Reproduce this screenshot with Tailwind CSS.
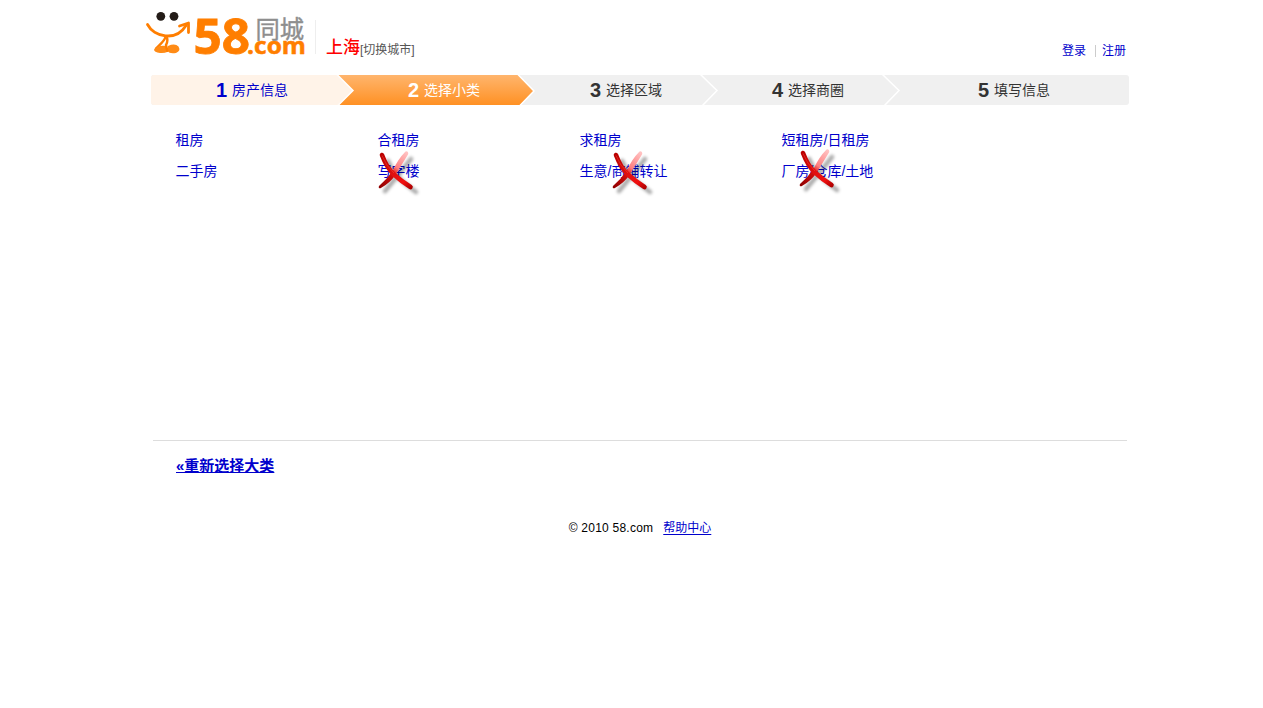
<!DOCTYPE html>
<html lang="zh-CN">
<head>
<meta charset="utf-8">
<title>58同城</title>
<script src="https://cdn.jsdelivr.net/npm/@tailwindcss/browser@4"></script>
</head>
<body class="bg-white overflow-hidden font-['Liberation_Sans','Noto_Sans_CJK_SC',sans-serif] text-[14px] text-[#0000cc]">
<svg class="absolute w-0 h-0">
  <defs>
    <linearGradient id="r" gradientUnits="userSpaceOnUse" x1="4" y1="5" x2="34" y2="39"><stop offset="0" stop-color="#b80000"/><stop offset=".5" stop-color="#e01010"/><stop offset=".8" stop-color="#f01010"/><stop offset="1" stop-color="#b00000"/></linearGradient>
    <linearGradient id="p" gradientUnits="userSpaceOnUse" x1="30" y1="3" x2="4" y2="39"><stop offset="0" stop-color="#ffc4c4"/><stop offset=".42" stop-color="#ff8080"/><stop offset=".58" stop-color="#d81010"/><stop offset="1" stop-color="#900000"/></linearGradient>
    <filter id="b" x="-30%" y="-30%" width="160%" height="160%"><feGaussianBlur stdDeviation="1.7"/></filter>
    <symbol id="cross" viewBox="0 0 46 50">
      <g filter="url(#b)" fill="none" stroke="#000" stroke-opacity=".32" stroke-width="4.500" stroke-linecap="round"><path d="M11 12C15 22 21 30 39 43M34 10Q23 24 8 42"/></g>
      <path d="M28.500 2.500Q31.500 1.500 31.300 5Q24 17 18.500 26Q13 34 3.500 39.300Q1 39.500 2 37Q10 30 15.500 22Q21 10 28.500 2.500Z" fill="url(#p)"/>
      <path d="M5 6C8 14 11 20 17 25.500Q24 32 33.500 38" fill="none" stroke="url(#r)" stroke-width="4.600" stroke-linecap="round"/>
      <path d="M5 6.500Q9 17 17 24" fill="none" stroke="#ff5a4a" stroke-width="1" stroke-opacity=".4"/>
    </symbol>
  </defs>
</svg>
<div class="w-[978px] ml-[151px]">
  <header class="h-[75px] flex">
    <svg class="-ml-[6px] w-[161px] h-[62px] shrink-0 overflow-visible" viewBox="145 0 161 62">
      <circle cx="160.800" cy="16.300" r="4.400" fill="#231c18"/><circle cx="174" cy="16.300" r="4.400" fill="#231c18"/>
      <g fill="none" stroke="#ff7e00" stroke-linecap="round" stroke-linejoin="round">
        <path d="M147.500 24.500C154 37 176 42 186 25.500" stroke-width="2.800"/>
        <path d="M179.500 26L188.500 23L188.500 32.500" stroke-width="2.800"/>
        <path d="M165.500 37C164 42 159 45 156 48.500" stroke-width="2.500"/>
      </g>
      <path d="M154 49.500Q158 44.500 167 46L167.500 51.500Q165 53.500 160 53Q154 52 154 49.500ZM168 46Q175 43 178.500 46.500Q181 51 176 53Q169 54 168 51Z" fill="#ff8b16"/>
      <path d="M166.500 37Q168.500 40 166 45L167.500 52" fill="none" stroke="#ff7e00" stroke-width="2.500"/>
      <g font-family="'Open Sans',sans-serif" font-weight="700" fill="#ff7e00">
        <text x="193.500" y="53.500" font-size="48.500" textLength="56.500" lengthAdjust="spacingAndGlyphs" stroke="#ff7e00" stroke-width=".8">58</text>
        <text x="247" y="54" font-size="23" textLength="59" lengthAdjust="spacingAndGlyphs" stroke="#ff7e00" stroke-width=".5">.com</text>
      </g>
      <text x="255.500" y="38" font-size="24.300" font-family="'Noto Sans CJK SC'" font-weight="400" fill="#8e8e8e" stroke="#8e8e8e" stroke-width=".4">同城</text>
    </svg>
    <div class="ml-[9px] mt-5 w-px h-[34px] bg-[#eeeeee]"></div>
    <div class="ml-[10px] mt-[36px] flex items-baseline h-6 leading-6">
      <span class="text-[17px] font-medium text-[#ff0000]">上海</span><span class="relative top-px text-[12px] text-[#555555]">[切换城市]</span>
    </div>
    <nav class="ml-auto mr-[3px] mt-[41px] h-5 leading-5 flex items-center text-[12px]">
      <a>登录</a><span class="w-px h-3 bg-[#cccccc] ml-[9px] mr-[6px]"></span><a>注册</a>
    </nav>
  </header>

  <ol class="relative flex h-[30px] rounded-[3px] overflow-hidden bg-[#f0f0f0] text-[#333333]">
    <svg class="absolute inset-0 w-full h-full" viewBox="0 0 978 30">
      <defs><linearGradient id="o" x1="0" y1="0" x2="0" y2="1"><stop stop-color="#ffb56d"/><stop offset="1" stop-color="#ff9124"/></linearGradient></defs>
      <path d="M0 0H186L202 15.500L187 30H0Z" fill="#fff3e8"/>
      <path d="M186 0H367L382.500 16L369 30H187L202 15.500Z" fill="url(#o)"/>
      <g fill="none" stroke="#fff" stroke-width="1.500"><path d="M185.500 -1L202 15.500L186.500 31M366.500 -1L383 16L368.500 31M549 -1L566 15.500L551 31M731 -1L748 15.500L733 31"/></g>
    </svg>
    <li class="relative flex items-center w-[257px] pl-[65px] text-[#0000cc]"><b class="text-[20px] w-4">1</b>房产信息</li>
    <li class="relative flex items-center w-[182px] text-white"><b class="text-[20px] w-4">2</b>选择小类</li>
    <li class="relative flex items-center w-[182px]"><b class="text-[20px] w-4">3</b>选择区域</li>
    <li class="relative flex items-center w-[206px]"><b class="text-[20px] w-4">4</b>选择商圈</li>
    <li class="relative flex items-center"><b class="text-[20px] w-4">5</b>填写信息</li>
  </ol>

  <main class="h-[335px] pt-5 pl-[24.500px]">
    <div class="grid grid-cols-[repeat(4,202px)] auto-rows-[31px] leading-[31px] whitespace-nowrap">
      <a>租房</a><a>合租房</a><a>求租房</a><a>短租房/日租房</a>
      <a>二手房</a>
      <a class="relative">写字楼<svg class="absolute -left-px -top-[7px] w-[46px] h-[50px]"><use href="#cross"/></svg></a>
      <a class="relative">生意/商铺转让<svg class="absolute left-[31px] -top-[7px] w-[46px] h-[50px]"><use href="#cross"/></svg></a>
      <a class="relative">厂房/仓库/土地<svg class="absolute left-[16px] -top-[9px] w-[46px] h-[50px]"><use href="#cross"/></svg></a>
    </div>
  </main>
  <div class="mx-[2px] h-px bg-[#dddddd]"></div>
  <div class="pl-[25px] pt-[13px] h-[76px] leading-6"><a class="text-[15px] font-bold underline underline-offset-1">«重新选择大类</a></div>
  <footer class="flex justify-center gap-[10px] text-[12px] leading-[22px] text-black"><span class="tracking-[0.23px]">© 2010 58.com</span><a class="text-[#0000cc] underline underline-offset-2">帮助中心</a></footer>
</div>
</body>
</html>
